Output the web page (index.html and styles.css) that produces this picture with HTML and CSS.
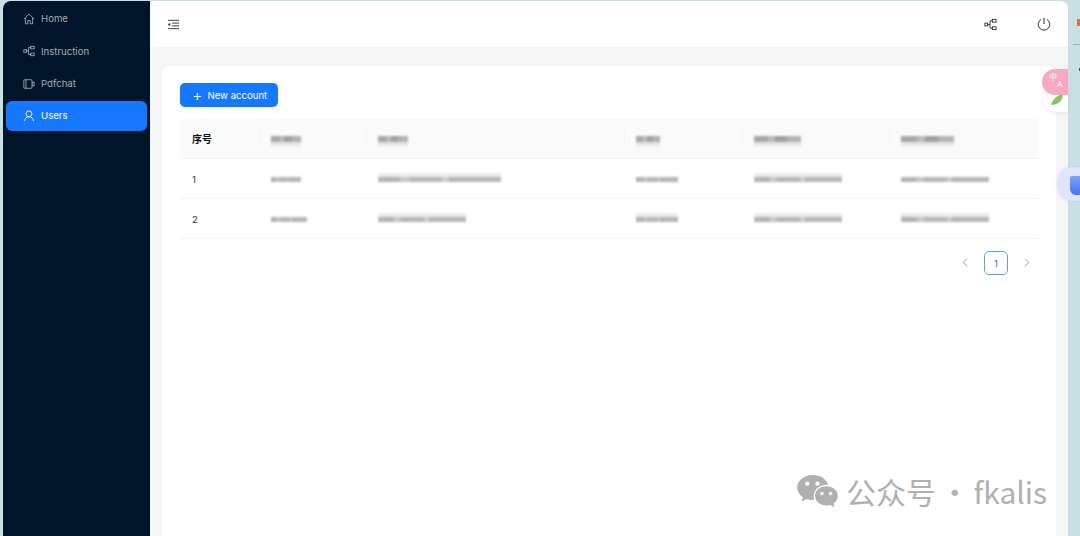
FILE: index.html
```html
<!DOCTYPE html>
<html lang="en">
<head>
<meta charset="utf-8">
<title>Users</title>
<link rel="stylesheet" href="styles.css">
</head>
<body>
<div class="window">
  <aside class="sidebar">
    <nav class="menu">
      <a class="item">
        <svg class="ico" viewBox="0 0 14 14"><path d="M1 7.200 7 1.400 13 7.200M2.800 5.600V12.600H5.600V8.800H8.400V12.600H11.200V5.600"/></svg>
        <span>Home</span>
      </a>
      <a class="item">
        <svg class="ico" viewBox="0 0 14 14"><rect x="1" y="5.500" width="3" height="3"/><rect x="9" y="1.500" width="4" height="3"/><rect x="9" y="9.500" width="4" height="3"/><path d="M4 7H6.500V3H9M6.500 7V11H9"/></svg>
        <span>Instruction</span>
      </a>
      <a class="item">
        <svg class="ico" viewBox="0 0 14 14"><rect x="1" y="2" width="9.500" height="10" rx="1"/><path d="M3.500 2V12M10.500 6 13 4.500V9.500L10.500 8"/></svg>
        <span>Pdfchat</span>
      </a>
      <a class="item active">
        <svg class="ico" viewBox="0 0 14 14"><circle cx="7" cy="4.500" r="3.400"/><path d="M1.800 13C2 9.800 4.200 7.900 7 7.900S12 9.800 12.200 13"/></svg>
        <span>Users</span>
      </a>
    </nav>
  </aside>
  <div class="main">
    <header class="topbar">
      <svg class="tool" viewBox="0 0 14 14"><path d="M1 2.500H13M5.500 5.500H13M5.500 8.500H13M1 11.500H13"/><path class="solid" d="M3.500 5 1 7 3.500 9Z"/></svg>
      <div class="top-actions">
        <svg class="tool" viewBox="0 0 14 14"><rect x="1" y="5.500" width="3" height="3"/><rect x="9" y="1.500" width="4" height="3"/><rect x="9" y="9.500" width="4" height="3"/><path d="M4 7H6.500V3H9M6.500 7V11H9"/></svg>
        <svg class="tool power" viewBox="0 0 14 14"><path d="M4.200 2.300A5.800 5.800 0 1 0 9.800 2.300M7 .8V7"/></svg>
      </div>
    </header>
    <main class="content">
      <section class="card">
        <button class="primary"><span class="plus">+</span>New account</button>
        <div class="table">
          <div class="row head">
            <div class="cell">序号</div>
            <div class="cell"><i class="blur dark" style="width:30px"></i></div>
            <div class="cell"><i class="blur dark" style="width:30px"></i></div>
            <div class="cell"><i class="blur dark" style="width:24px"></i></div>
            <div class="cell"><i class="blur dark" style="width:47px"></i></div>
            <div class="cell"><i class="blur dark" style="width:53px"></i></div>
          </div>
          <div class="row">
            <div class="cell">1</div>
            <div class="cell"><i class="blur" style="width:30px"></i></div>
            <div class="cell"><i class="blur tall" style="width:123px"></i></div>
            <div class="cell"><i class="blur" style="width:42px"></i></div>
            <div class="cell"><i class="blur tall" style="width:88px"></i></div>
            <div class="cell"><i class="blur" style="width:88px"></i></div>
          </div>
          <div class="row">
            <div class="cell">2</div>
            <div class="cell"><i class="blur" style="width:36px"></i></div>
            <div class="cell"><i class="blur tall" style="width:88px"></i></div>
            <div class="cell"><i class="blur tall" style="width:42px"></i></div>
            <div class="cell"><i class="blur tall" style="width:88px"></i></div>
            <div class="cell"><i class="blur tall" style="width:88px"></i></div>
          </div>
        </div>
        <div class="pager">
          <svg class="chev" viewBox="0 0 10 10"><path d="M6.500 1.500 3 5 6.500 8.500"/></svg>
          <span class="page">1</span>
          <svg class="chev" viewBox="0 0 10 10"><path d="M3.500 1.500 7 5 3.500 8.500"/></svg>
        </div>
      </section>
    </main>
  </div>
</div>

<div class="ext-pill">
  <svg class="leaf" viewBox="0 0 14 14"><path d="M1 13C3 6 8 3 13 2 13 9 8 13 1 13Z"/></svg>
</div>
<div class="ext-translate"><span>中</span><span class="ext-a">A</span></div>
<div class="ext-orb"><span class="orb-core"></span></div>
<span class="edge-mark"></span>
<span class="edge-line"></span>
<span class="edge-dot"></span>

<div class="watermark">
  <svg class="wechat" viewBox="0 0 42 34">
    <path d="M16 0C7.200 0 0 5.800 0 13c0 4.100 2.300 7.700 6 10.100L4.500 27.500l5.300-2.700c1.900.6 4 .9 6.200.9.600 0 1.200 0 1.700-.1-.4-1.200-.6-2.500-.6-3.800C17.100 15 23 10 30.900 10c.4 0 .8 0 1.100.1C30.500 4.300 23.900 0 16 0Z"/>
    <path d="M42 21.500C42 15.700 36.600 11.500 30 11.500S18.500 15.700 18.500 21.500 23.900 31.500 30 31.500c1.500 0 3-.2 4.300-.7L38.500 33.500l-1-3.900C40.200 27.600 42 24.800 42 21.500Z"/>
    <circle class="eye" cx="10.500" cy="9" r="2.200"/><circle class="eye" cx="21" cy="9" r="2.200"/>
    <circle class="eye" cx="25.500" cy="19" r="1.800"/><circle class="eye" cx="34.500" cy="19" r="1.800"/>
  </svg>
  <span class="wm-text">公众号 · fkalis</span>
</div>
</body>
</html>
```

FILE: styles.css
```css
* { box-sizing: border-box; }
html, body { height: 100%; }
body {
  margin: 0;
  background: #c9e0e4;
  font-family: "Inter", "Noto Sans CJK SC", sans-serif;
  overflow: hidden;
  position: relative;
}
.window {
  display: flex;
  width: 1065px;
  height: 535px;
  margin: 1px 0 0 3px;
  border-radius: 8px 8px 0 0;
  overflow: hidden;
  background: #f5f5f5;
}
.sidebar {
  width: 147px;
  flex: none;
  background: #001529;
  padding: 3.300px 3px;
}
.menu { display: flex; flex-direction: column; gap: 3px; }
.item {
  display: flex;
  align-items: center;
  gap: 6px;
  height: 29.330px;
  padding-left: 17px;
  border-radius: 6px;
  font-size: 9.600px;
  color: rgba(255, 255, 255, .65);
}
.item.active { background: #1677ff; color: #fff; }
.ico {
  width: 12px;
  height: 12px;
  fill: none;
  stroke: currentColor;
  stroke-width: 1;
}
.main { flex: 1; min-width: 0; display: flex; flex-direction: column; }
.topbar {
  height: 46px;
  flex: none;
  background: #fff;
  display: flex;
  align-items: center;
  justify-content: space-between;
  padding: 0 17px;
}
.top-actions { display: flex; gap: 40px; align-items: center; }
.tool {
  width: 13px;
  height: 13px;
  fill: none;
  stroke: #333;
  stroke-width: 1;
}
.tool .solid { fill: #333; stroke: none; }
.power { width: 14px; height: 14px; }
.content { flex: 1; padding: 19px 12px 0; min-height: 0; }
.card {
  height: 100%;
  background: #fff;
  border-radius: 8px 8px 0 0;
  padding: 17px 18px;
}
.primary {
  display: flex;
  align-items: center;
  width: 98px;
  height: 24px;
  padding: 0 0 0 12px;
  border: 0;
  border-radius: 5px;
  background: #1677ff;
  color: #fff;
  font: 9.600px "Inter", sans-serif;
}
.plus { font-size: 16px; font-weight: 300; line-height: 1; margin-right: 5px; }
.table { margin-top: 12px; }
.row {
  display: grid;
  grid-template-columns: 79px 107px 258px 118px 147px 149px;
  height: 40px;
  padding-top: 1px;
  border-bottom: 1px solid #f3f3f3;
  align-items: center;
  font-size: 9.600px;
  color: #333;
}
.row.head { background: #fafafa; font-weight: 600; color: #111; padding-top: 0; font-size: 10px; }
.cell { padding-left: 12px; position: relative; display: flex; align-items: center; }
.head .cell + .cell::before {
  content: "";
  position: absolute;
  left: 0;
  top: 50%;
  height: 16px;
  margin-top: -8px;
  border-left: 1px solid #f3f3f3;
}
.blur {
  display: block;
  height: 5px;
  background: linear-gradient(90deg, #b4b4b4 0 18%, #c8c8c8 18% 26%, #b8b8b8 26% 52%, #cdcdcd 52% 58%, #b6b6b6 58% 100%);
  filter: blur(1px);
}
.blur.tall { box-shadow: 0 -4px 0 #ececec; }
.blur.dark {
  height: 6px;
  background: linear-gradient(90deg, #a8a8a8 0 30%, #bcbcbc 30% 45%, #a0a0a0 45% 70%, #b4b4b4 70% 100%);
  box-shadow: 0 4px 0 #e6e6e6;
}
.pager {
  display: flex;
  justify-content: flex-end;
  align-items: center;
  gap: 13px;
  margin-top: 12px;
  padding-right: 6px;
}
.chev {
  width: 11px;
  height: 11px;
  margin-top: -1px;
  fill: none;
  stroke: #bcbcbc;
  stroke-width: 1;
}
.page {
  width: 24px;
  height: 24px;
  border: 1px solid #5aa5e0;
  border-radius: 5px;
  font-size: 9.600px;
  color: #1677c8;
  display: flex;
  align-items: center;
  justify-content: center;
}
.ext-pill {
  position: absolute;
  left: 1043px;
  top: 86px;
  width: 25px;
  height: 26px;
  background: #fff;
  border-radius: 13px 0 0 13px;
  box-shadow: 0 1px 5px rgba(0, 0, 0, .08);
  padding: 6px 0 0 7px;
}
.leaf { display: block; width: 14px; height: 14px; fill: #86c65e; }
.ext-translate {
  position: absolute;
  left: 1042px;
  top: 69px;
  width: 26px;
  height: 26px;
  padding: 3px 0 0 7px;
  background: #f5a9c4;
  border-radius: 13px 0 0 13px;
  color: #fff;
  font-size: 8px;
  line-height: 10px;
  display: flex;
}
.ext-a { margin-top: 7px; }
.ext-orb {
  position: absolute;
  left: 1058px;
  top: 167px;
  width: 34px;
  height: 34px;
  border-radius: 50%;
  background: #dfe5fb;
  box-shadow: 0 0 4px #c5cff8;
}
.orb-core {
  position: absolute;
  left: 12px;
  top: 9px;
  width: 14px;
  height: 19px;
  border-radius: 2px 2px 6px 6px;
  background: linear-gradient(#7aa5f5, #4f6ff5);
}
.edge-mark {
  position: absolute;
  left: 1077px;
  top: 19px;
  width: 3px;
  height: 7px;
  background: #e8703a;
}
.edge-line {
  position: absolute;
  left: 1073px;
  top: 44px;
  width: 7px;
  height: 1px;
  background: #9fb2b6;
}
.edge-dot {
  position: absolute;
  left: 1079px;
  top: 68px;
  width: 1px;
  height: 3px;
  background: #44585c;
}
.watermark {
  position: absolute;
  left: 797px;
  top: 475px;
  display: flex;
  align-items: center;
  gap: 10px;
  color: #b0b0b0;
}
.wechat { width: 41px; height: 33px; fill: #b0b0b0; }
.wechat .eye { fill: #fff; }
.wm-text {
  font-family: "Noto Sans CJK SC", "Noto Sans", sans-serif;
  font-size: 30px;
  line-height: 34px;
  white-space: nowrap;
  word-spacing: -3px;
  margin: -2px 0 0 -2px;
}
```
